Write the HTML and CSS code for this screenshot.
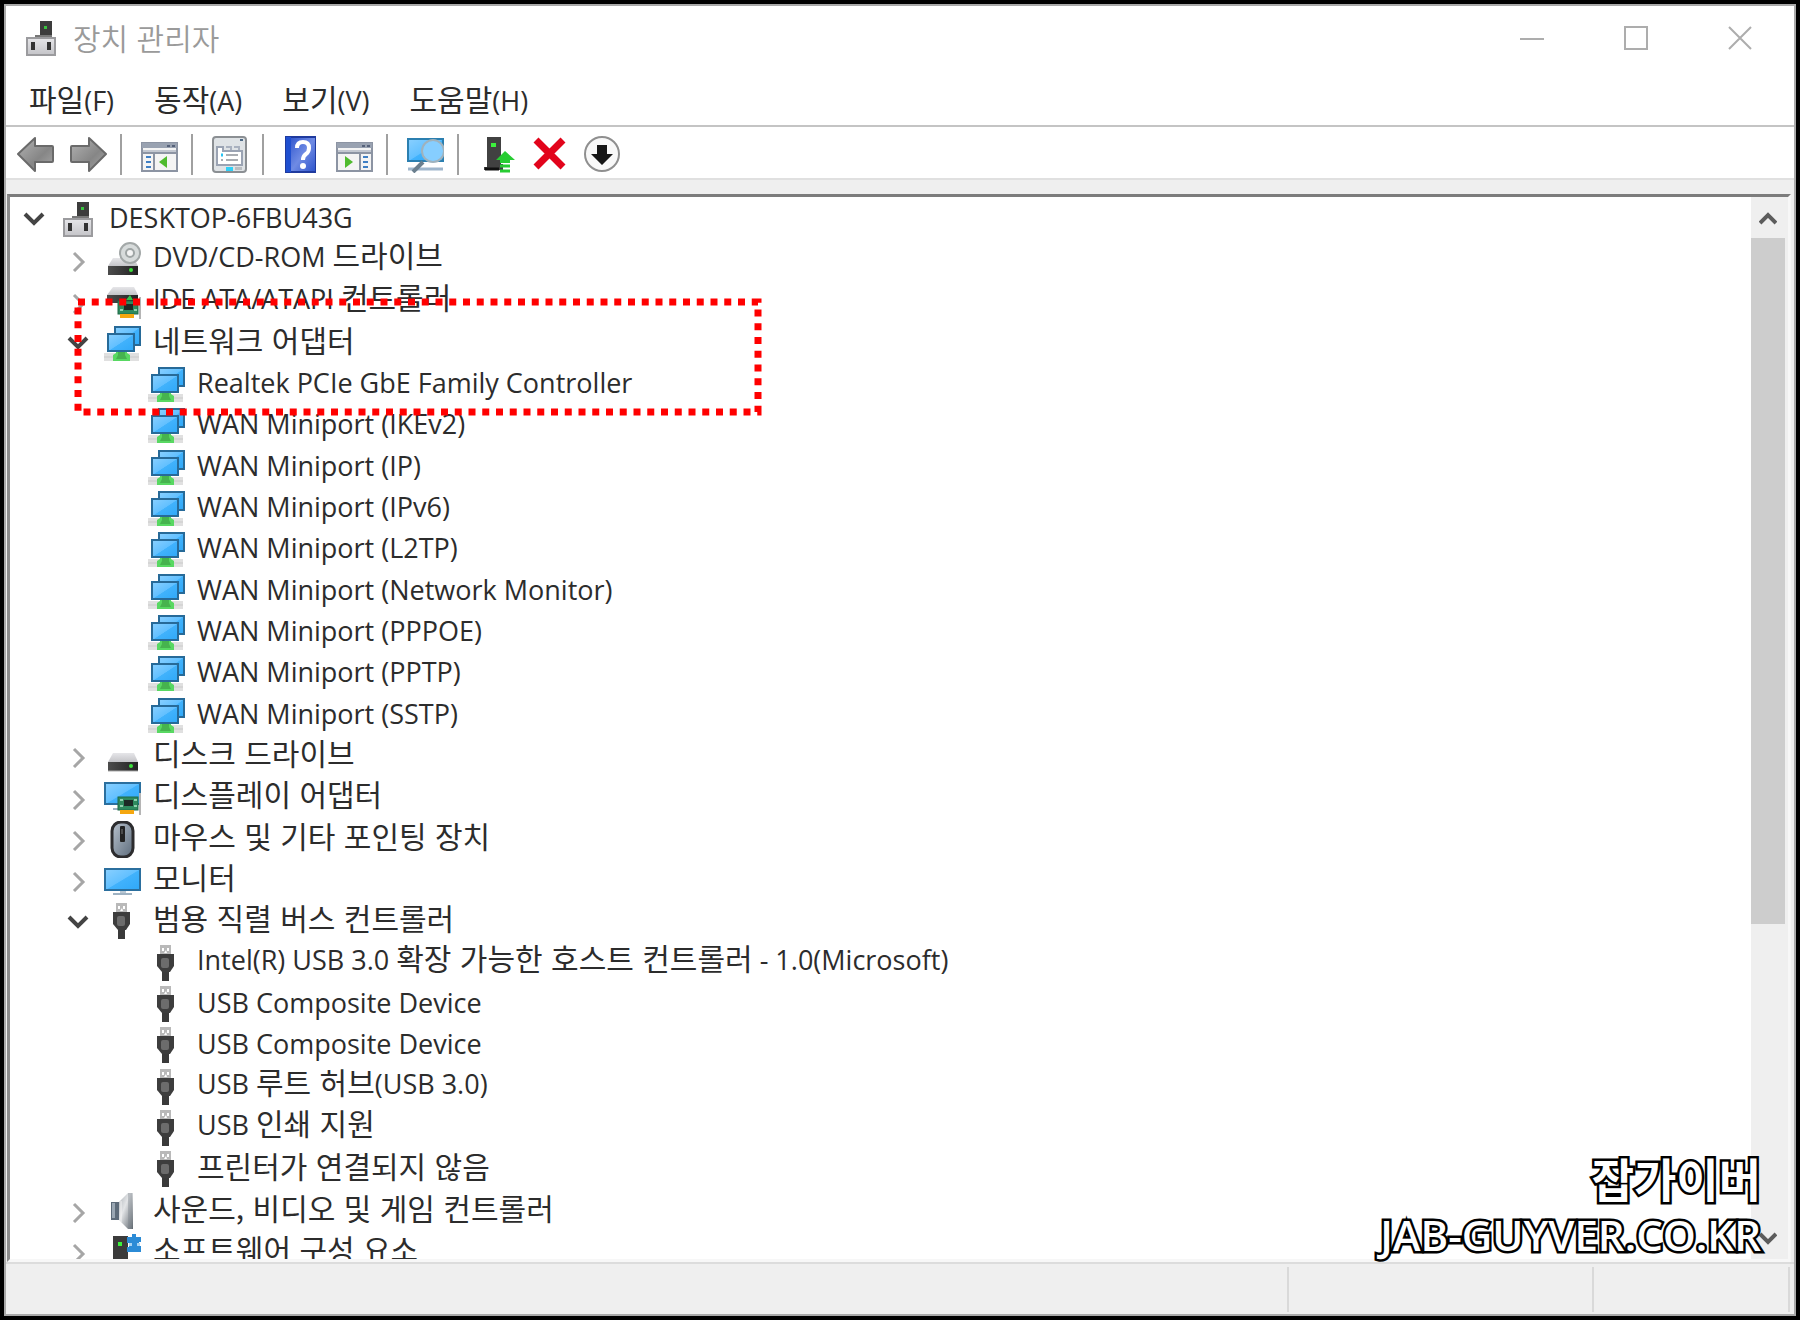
FILE: index.html
```html
<!DOCTYPE html>
<html lang="ko">
<head>
    <meta charset="UTF-8">
    <meta name="viewport" content="width=device-width, initial-scale=1.0">
    <title>장치 관리자</title>
    <link rel="stylesheet" href="styles.css">
</head>
<body>
    <!-- Iconos -->
    <svg class="sprite" aria-hidden="true">
        <defs>
            <linearGradient id="screen" x1="0" y1="0" x2="1" y2="1">
                <stop offset="0" stop-color="#8ad0ff"/>
                <stop offset="0.5" stop-color="#62c0ff"/>
                <stop offset="0.52" stop-color="#41b2fc"/>
                <stop offset="1" stop-color="#2fa8f8"/>
            </linearGradient>
            <linearGradient id="metal" x1="0" y1="0" x2="0" y2="1">
                <stop offset="0" stop-color="#e6e6e9"/>
                <stop offset="1" stop-color="#c4c4c8"/>
            </linearGradient>
            <linearGradient id="band" x1="0" y1="0" x2="1" y2="0">
                <stop offset="0" stop-color="#4c4c4c"/>
                <stop offset="1" stop-color="#222"/>
            </linearGradient>
            <linearGradient id="arrow" x1="0" y1="0" x2="1" y2="1">
                <stop offset="0" stop-color="#b4b4b4"/>
                <stop offset="0.6" stop-color="#868686"/>
                <stop offset="1" stop-color="#a8a8a8"/>
            </linearGradient>
            <linearGradient id="book" x1="0" y1="0" x2="1" y2="1">
                <stop offset="0" stop-color="#3459cf"/>
                <stop offset="0.5" stop-color="#6f8be4"/>
                <stop offset="1" stop-color="#2f55cc"/>
            </linearGradient>
            <linearGradient id="cone" x1="0" y1="0" x2="1" y2="1">
                <stop offset="0" stop-color="#aeb3b8"/>
                <stop offset="0.4" stop-color="#e3e5e7"/>
                <stop offset="1" stop-color="#5e666e"/>
            </linearGradient>
            <linearGradient id="shell" x1="0" y1="0" x2="1" y2="1">
                <stop offset="0" stop-color="#b9c3ce"/>
                <stop offset="1" stop-color="#5c6b7b"/>
            </linearGradient>
        </defs>

        <symbol id="i-computer" viewBox="0 0 37 37">
            <path d="M17 1h12v16H13v-2h4z" fill="#3c3c3c"/>
            <path d="M12 16h17" stroke="#777" stroke-width="2"/>
            <rect x="21" y="6" width="3" height="3" fill="#39c43f"/>
            <rect x="4" y="18" width="28" height="17" fill="url(#metal)" stroke="#9b9b9e" stroke-width="2"/>
            <rect x="8" y="22" width="4" height="8" fill="#333"/>
            <rect x="24" y="22" width="4" height="8" fill="#333"/>
        </symbol>
        <symbol id="i-disk" viewBox="0 0 37 37">
            <path d="M9 15h21l4 9H4z" fill="url(#metal)"/>
            <rect x="4" y="24" width="30" height="9" fill="url(#band)"/>
            <path d="M4 33h30" stroke="#aaa" stroke-width="1"/>
            <circle cx="27" cy="28" r="2" fill="#3ae03a"/>
        </symbol>
        <symbol id="i-dvd" viewBox="0 0 37 37">
            <path d="M9 16h21l4 8H4z" fill="url(#metal)"/>
            <circle cx="26" cy="11" r="10" fill="#d7dbdb" stroke="#a3a8a8" stroke-width="2"/>
            <circle cx="26" cy="11" r="4" fill="#f4f4f4" stroke="#9fa5a5" stroke-width="2"/>
            <rect x="4" y="24" width="30" height="9" fill="url(#band)"/>
            <circle cx="27" cy="28" r="2" fill="#3ae03a"/>
        </symbol>
        <symbol id="card" viewBox="0 0 37 37">
            <rect x="14" y="18" width="20" height="13" fill="#2f8a5e" stroke="#1f6b47"/>
            <path d="M16 21h3M16 27h3M30 21h3M30 27h3" stroke="#8fd0ae" stroke-width="2"/>
            <rect x="20" y="21" width="9" height="6" fill="#1d2a26"/>
            <rect x="16" y="31" width="14" height="4" fill="#f5a70f"/>
            <path d="M36 14v22" stroke="#b5b5b5" stroke-width="2"/>
        </symbol>
        <symbol id="i-ide" viewBox="0 0 37 37">
            <path d="M9 4h21l4 8H3z" fill="url(#metal)"/>
            <rect x="3" y="12" width="31" height="8" fill="url(#band)"/>
            <path d="M22 17l4-5 3 5z" fill="#35c24a"/>
            <use href="#card"/>
        </symbol>
        <symbol id="i-network" viewBox="0 0 37 37">
            <path d="M0 28h35v8H0z" fill="#e0e0e0"/>
            <path d="M0 32h35" stroke="#cacaca" stroke-width="1"/>
            <path d="M12 26h11v2l3 2v6H9v-6l3-2z" fill="#58d862"/>
            <path d="M14 27h7v3l2 4H12l2-4z" fill="#46b34e"/>
            <rect x="11" y="2" width="25" height="18" fill="url(#screen)" stroke="#276a98" stroke-width="2"/>
            <rect x="4" y="9" width="26" height="17" fill="url(#screen)" stroke="#276a98" stroke-width="2"/>
        </symbol>
        <symbol id="i-monitor" viewBox="0 0 37 37">
            <rect x="1" y="7" width="35" height="21" fill="url(#screen)" stroke="#2b6f9e" stroke-width="2"/>
            <path d="M16 29h6v2h-6z" fill="#b9c8d4"/>
            <path d="M9 32h19" stroke="#9fb2c2" stroke-width="2"/>
        </symbol>
        <symbol id="i-display" viewBox="0 0 37 37">
            <rect x="1" y="4" width="35" height="21" fill="url(#screen)" stroke="#2b6f9e" stroke-width="2"/>
            <path d="M9 30h8" stroke="#9fb2c2" stroke-width="2"/>
            <use href="#card"/>
        </symbol>
        <symbol id="i-mouse" viewBox="0 0 37 37">
            <rect x="8" y="1" width="21" height="35" rx="9" fill="url(#shell)" stroke="#2c2c2e" stroke-width="3"/>
            <rect x="16" y="5" width="5" height="16" rx="1" fill="#222"/>
            <path d="M18 8v5" stroke="#777" stroke-width="1"/>
        </symbol>
        <symbol id="i-usb" viewBox="0 0 37 37">
            <rect x="12" y="0" width="11" height="10" fill="#b9b9b9"/>
            <path d="M14 3h2v3h-2zM19 3h2v3h-2zM16 8l2-3 1 3z" fill="#fff"/>
            <path d="M9 9h17v12l-4 6h-8l-5-6z" fill="#3d3d3d"/>
            <rect x="13" y="13" width="8" height="10" rx="2" fill="#6c6c6c"/>
            <rect x="14" y="27" width="7" height="9" fill="#3a3a3a"/>
        </symbol>
        <symbol id="i-sound" viewBox="0 0 37 37">
            <path d="M15 9l9-9h5v36h-5l-9-9z" fill="url(#cone)"/>
            <path d="M24 0h4v36h-4z" fill="#7d858c" opacity="0.4"/>
            <path d="M17 8v21" stroke="#f3f3f3" stroke-width="1"/>
            <rect x="7" y="9" width="8" height="18" fill="#5d6b79"/>
            <rect x="8" y="10" width="3" height="15" fill="#9aa7b3"/>
        </symbol>
        <symbol id="i-software" viewBox="0 0 37 37">
            <path d="M9 2h15v35H9z" fill="#3b3b3b"/>
            <rect x="14" y="8" width="4" height="4" fill="#3cf03c"/>
            <path d="M23 3h5V0h4v3h5v5h-2v4h2v6H23v-5h2V9h-2z" fill="#2b8bd6"/>
            <path d="M25 9h3v3h-3zM33 9h3v3h-3z" fill="#a9d4f3"/>
        </symbol>

        <symbol id="t-back" viewBox="0 0 37 37">
            <path d="M1 18L18 2v8h17q1 0 1 1v14q0 1-1 1H18v9z" fill="url(#arrow)" stroke="#6a6a6a" stroke-width="2" stroke-linejoin="round"/>
        </symbol>
        <symbol id="t-forward" viewBox="0 0 37 37">
            <path d="M36 18L19 2v8H2q-1 0-1 1v14q0 1 1 1h17v9z" fill="url(#arrow)" stroke="#6a6a6a" stroke-width="2" stroke-linejoin="round"/>
        </symbol>
        <symbol id="t-tree" viewBox="0 0 37 37">
            <rect x="1" y="7" width="35" height="28" fill="#f4f4f4" stroke="#8c94a3" stroke-width="2"/>
            <rect x="1" y="7" width="35" height="5" fill="#99a2b1"/>
            <path d="M26 10h3M31 10h3" stroke="#56627a" stroke-width="2"/>
            <path d="M2 15h33" stroke="#c3c8d1" stroke-width="2"/>
            <path d="M1 17h35M13 17v18" stroke="#8c94a3" stroke-width="2"/>
            <path d="M5 21h5M5 26h5M5 31h5" stroke="#3f7fc4" stroke-width="2"/>
            <path d="M26 20v12l-8-6z" fill="#4fbb2e"/>
        </symbol>
        <symbol id="t-action" viewBox="0 0 37 37">
            <rect x="1" y="7" width="35" height="28" fill="#f4f4f4" stroke="#8c94a3" stroke-width="2"/>
            <rect x="1" y="7" width="35" height="5" fill="#99a2b1"/>
            <path d="M26 10h3M31 10h3" stroke="#56627a" stroke-width="2"/>
            <path d="M2 15h33" stroke="#c3c8d1" stroke-width="2"/>
            <path d="M1 17h35M24 17v18" stroke="#8c94a3" stroke-width="2"/>
            <path d="M27 21h5M27 26h5M27 31h5" stroke="#3f7fc4" stroke-width="2"/>
            <path d="M9 20v12l8-6z" fill="#4fbb2e"/>
        </symbol>
        <symbol id="t-props" viewBox="0 0 37 37">
            <rect x="1" y="1" width="33" height="35" rx="3" fill="#dfe3e6" stroke="#8b8f93" stroke-width="2"/>
            <path d="M28 3h3v2h-3z" fill="#4e6a86"/>
            <path d="M5 11h6v4h19v14H5z" fill="#fff" stroke="#9aa3b3" stroke-width="2"/>
            <path d="M14 11h5v3M22 11h5v3" fill="none" stroke="#a9b1bf" stroke-width="2"/>
            <path d="M9 19h2" stroke="#27c3f3" stroke-width="3"/>
            <path d="M14 19h12M14 24h12M9 24h2" stroke="#a9adb2" stroke-width="2"/>
            <rect x="14" y="31" width="7" height="4" fill="#2fd0f7"/>
            <rect x="23" y="31" width="7" height="3" fill="#b9bdc1"/>
        </symbol>
        <symbol id="t-help" viewBox="0 0 37 37">
            <rect x="2" y="0" width="31" height="37" fill="#1f3a9e"/>
            <rect x="3" y="1" width="5" height="35" fill="#1f4fd0"/>
            <rect x="8" y="2" width="24" height="33" fill="url(#book)"/>
            <path d="M14 12q0-6 6-6 6 0 6 6 0 4-3 6-3 2-3 6" fill="none" stroke="#fff" stroke-width="4"/>
            <circle cx="20" cy="30" r="3" fill="#fff"/>
        </symbol>
        <symbol id="t-scan" viewBox="0 0 37 37">
            <rect x="1" y="3" width="35" height="22" fill="url(#screen)" stroke="#2b7fb0" stroke-width="2"/>
            <path d="M1 33h35" stroke="#9fb6cc" stroke-width="3"/>
            <path d="M6 36l10-10" stroke="#6b7f8e" stroke-width="4"/>
            <circle cx="26" cy="15" r="11" fill="#86ceff" stroke="#9fb2bd" stroke-width="2"/>
        </symbol>
        <symbol id="t-update" viewBox="0 0 37 37">
            <path d="M9 1h14v27h2v6H6v-3h3z" fill="#414141"/>
            <path d="M7 33h14" stroke="#111" stroke-width="3"/>
            <rect x="13" y="7" width="5" height="4" fill="#3cf03c"/>
            <path d="M27 15l10 9h-5v3H22v-3h-4z" fill="#27cc32"/>
            <path d="M22 30h10M22 35h10" stroke="#27cc32" stroke-width="3"/>
        </symbol>
        <symbol id="t-remove" viewBox="0 0 37 37">
            <path d="M5 4l27 27M32 4L5 31" stroke="#e2041b" stroke-width="7"/>
        </symbol>
        <symbol id="t-disable" viewBox="0 0 37 37">
            <circle cx="18" cy="18" r="17" fill="#f8f8f8" stroke="#8f8f8f" stroke-width="2"/>
            <path d="M13 9h10v9h6L18 29 7 18h6z" fill="#161616"/>
        </symbol>

        <symbol id="c-down" viewBox="0 0 24 24">
            <path d="M3 7l9 9 9-9" fill="none" stroke="#444" stroke-width="4"/>
        </symbol>
        <symbol id="c-right" viewBox="0 0 24 24">
            <path d="M8 5l9 9-9 9" fill="none" stroke="#a6a6a6" stroke-width="3"/>
        </symbol>
    </svg>

    <div class="window">
        <header class="titlebar">
            <svg class="icon"><use href="#i-computer"/></svg>
            <h1>장치 관리자</h1>
            <div class="window-buttons">
                <button type="button" aria-label="최소화"><svg viewBox="0 0 24 24"><path d="M0 13h24"/></svg></button>
                <button type="button" aria-label="최대화"><svg viewBox="0 0 24 24"><path d="M1 1h22v22H1z"/></svg></button>
                <button type="button" aria-label="닫기"><svg viewBox="0 0 24 24"><path d="M1 1l22 22M23 1L1 23"/></svg></button>
            </div>
        </header>

        <nav class="menubar">
            <button type="button">파일<span class="en">(F)</span></button>
            <button type="button">동작<span class="en">(A)</span></button>
            <button type="button">보기<span class="en">(V)</span></button>
            <button type="button">도움말<span class="en">(H)</span></button>
        </nav>

        <div class="toolbar">
            <button type="button" aria-label="뒤로"><svg class="icon"><use href="#t-back"/></svg></button>
            <button type="button" aria-label="앞으로"><svg class="icon"><use href="#t-forward"/></svg></button>
            <span class="separator"></span>
            <button type="button" aria-label="콘솔 트리 표시"><svg class="icon"><use href="#t-tree"/></svg></button>
            <span class="separator"></span>
            <button type="button" aria-label="속성"><svg class="icon"><use href="#t-props"/></svg></button>
            <span class="separator"></span>
            <button type="button" aria-label="도움말"><svg class="icon"><use href="#t-help"/></svg></button>
            <button type="button" aria-label="작업 창 표시"><svg class="icon"><use href="#t-action"/></svg></button>
            <span class="separator"></span>
            <button type="button" aria-label="하드웨어 변경 사항 검색"><svg class="icon"><use href="#t-scan"/></svg></button>
            <span class="separator"></span>
            <button type="button" aria-label="드라이버 업데이트"><svg class="icon"><use href="#t-update"/></svg></button>
            <button type="button" aria-label="디바이스 제거"><svg class="icon"><use href="#t-remove"/></svg></button>
            <button type="button" aria-label="디바이스 사용 안 함"><svg class="icon"><use href="#t-disable"/></svg></button>
        </div>

        <main class="content">
            <ul class="tree">
                <li class="node level-0"><button type="button" class="toggle" aria-label="축소"><svg><use href="#c-down"/></svg></button><svg class="icon"><use href="#i-computer"/></svg><span class="name en">DESKTOP-6FBU43G</span></li>
                <li class="node level-1"><button type="button" class="toggle" aria-label="확장"><svg><use href="#c-right"/></svg></button><svg class="icon"><use href="#i-dvd"/></svg><span class="name"><span class="en">DVD/CD-ROM </span>드라이브</span></li>
                <li class="node level-1"><button type="button" class="toggle" aria-label="확장"><svg><use href="#c-right"/></svg></button><svg class="icon"><use href="#i-ide"/></svg><span class="name"><span class="en">IDE ATA/ATAPI </span>컨트롤러</span></li>
                <li class="node level-1"><button type="button" class="toggle" aria-label="축소"><svg><use href="#c-down"/></svg></button><svg class="icon"><use href="#i-network"/></svg><span class="name">네트워크 어댑터</span></li>
                <li class="node level-2"><svg class="icon"><use href="#i-network"/></svg><span class="name en">Realtek PCIe GbE Family Controller</span></li>
                <li class="node level-2"><svg class="icon"><use href="#i-network"/></svg><span class="name en">WAN Miniport (IKEv2)</span></li>
                <li class="node level-2"><svg class="icon"><use href="#i-network"/></svg><span class="name en">WAN Miniport (IP)</span></li>
                <li class="node level-2"><svg class="icon"><use href="#i-network"/></svg><span class="name en">WAN Miniport (IPv6)</span></li>
                <li class="node level-2"><svg class="icon"><use href="#i-network"/></svg><span class="name en">WAN Miniport (L2TP)</span></li>
                <li class="node level-2"><svg class="icon"><use href="#i-network"/></svg><span class="name en">WAN Miniport (Network Monitor)</span></li>
                <li class="node level-2"><svg class="icon"><use href="#i-network"/></svg><span class="name en">WAN Miniport (PPPOE)</span></li>
                <li class="node level-2"><svg class="icon"><use href="#i-network"/></svg><span class="name en">WAN Miniport (PPTP)</span></li>
                <li class="node level-2"><svg class="icon"><use href="#i-network"/></svg><span class="name en">WAN Miniport (SSTP)</span></li>
                <li class="node level-1"><button type="button" class="toggle" aria-label="확장"><svg><use href="#c-right"/></svg></button><svg class="icon"><use href="#i-disk"/></svg><span class="name">디스크 드라이브</span></li>
                <li class="node level-1"><button type="button" class="toggle" aria-label="확장"><svg><use href="#c-right"/></svg></button><svg class="icon"><use href="#i-display"/></svg><span class="name">디스플레이 어댑터</span></li>
                <li class="node level-1"><button type="button" class="toggle" aria-label="확장"><svg><use href="#c-right"/></svg></button><svg class="icon"><use href="#i-mouse"/></svg><span class="name">마우스 및 기타 포인팅 장치</span></li>
                <li class="node level-1"><button type="button" class="toggle" aria-label="확장"><svg><use href="#c-right"/></svg></button><svg class="icon"><use href="#i-monitor"/></svg><span class="name">모니터</span></li>
                <li class="node level-1"><button type="button" class="toggle" aria-label="축소"><svg><use href="#c-down"/></svg></button><svg class="icon"><use href="#i-usb"/></svg><span class="name">범용 직렬 버스 컨트롤러</span></li>
                <li class="node level-2"><svg class="icon"><use href="#i-usb"/></svg><span class="name"><span class="en">Intel(R) USB 3.0 </span>확장 가능한 호스트 컨트롤러<span class="en"> - 1.0(Microsoft)</span></span></li>
                <li class="node level-2"><svg class="icon"><use href="#i-usb"/></svg><span class="name en">USB Composite Device</span></li>
                <li class="node level-2"><svg class="icon"><use href="#i-usb"/></svg><span class="name en">USB Composite Device</span></li>
                <li class="node level-2"><svg class="icon"><use href="#i-usb"/></svg><span class="name"><span class="en">USB </span>루트 허브<span class="en">(USB 3.0)</span></span></li>
                <li class="node level-2"><svg class="icon"><use href="#i-usb"/></svg><span class="name"><span class="en">USB </span>인쇄 지원</span></li>
                <li class="node level-2"><svg class="icon"><use href="#i-usb"/></svg><span class="name">프린터가 연결되지 않음</span></li>
                <li class="node level-1"><button type="button" class="toggle" aria-label="확장"><svg><use href="#c-right"/></svg></button><svg class="icon"><use href="#i-sound"/></svg><span class="name">사운드, 비디오 및 게임 컨트롤러</span></li>
                <li class="node level-1"><button type="button" class="toggle" aria-label="확장"><svg><use href="#c-right"/></svg></button><svg class="icon"><use href="#i-software"/></svg><span class="name">소프트웨어 구성 요소</span></li>
            </ul>

            <div class="scrollbar">
                <button type="button" aria-label="위로"><svg viewBox="0 0 18 16"><path d="M1 13l8-8 8 8"/></svg></button>
                <div class="track"><div class="thumb"></div></div>
                <button type="button" aria-label="아래로"><svg viewBox="0 0 18 16"><path d="M1 3l8 8 8-8"/></svg></button>
            </div>

            <!-- Recuadro rojo -->
            <svg class="highlight" viewBox="0 0 688 118"><path d="M4 4h680v110H4z"/></svg>
        </main>

        <footer class="statusbar">
            <span></span>
            <span></span>
            <span></span>
        </footer>
    </div>

    <div class="watermark">
        <p class="brand">잡가이버</p>
        <p class="site">JAB-GUYVER.CO.KR</p>
    </div>
</body>
</html>
```

FILE: styles.css
```css
* {
    box-sizing: border-box;
}
body {
    margin: 0;
    height: 100vh;
    padding: 4px;
    background: #000;
    color: #2c2c2c;
    font-family: "Noto Sans CJK KR", "Noto Sans", sans-serif;
    font-size: 30px;
    line-height: 40px;
    position: relative;
}
h1, p, ul {
    margin: 0;
    padding: 0;
}
button {
    border: none;
    background: none;
    padding: 0;
    font: inherit;
    color: inherit;
}
.en {
    font-family: "Open Sans", "Noto Sans", sans-serif;
    font-size: 27px;
    white-space: pre;
}
.sprite {
    position: absolute;
    width: 0;
    height: 0;
}
.icon {
    width: 37px;
    height: 37px;
    flex: none;
    display: block;
}

.window {
    height: 100%;
    display: flex;
    flex-direction: column;
    background: #efefef;
    border: 2px solid #a9a9a9;
}

.titlebar {
    display: flex;
    align-items: center;
    height: 64px;
    padding: 0 2px 0 17px;
    background: #fff;
}
.titlebar h1 {
    flex: 1;
    margin-left: 13px;
    padding-bottom: 3px;
    font-size: 30px;
    font-weight: 350;
    color: #9a9a9a;
}
.window-buttons {
    display: flex;
}
.window-buttons button {
    width: 104px;
    height: 64px;
    display: flex;
    align-items: center;
    justify-content: center;
}
.window-buttons svg {
    width: 24px;
    height: 24px;
    fill: none;
    stroke: #adadad;
    stroke-width: 2;
}

.menubar {
    display: flex;
    gap: 40px;
    height: 57px;
    padding: 4px 23px 0;
    background: #fff;
    border-bottom: 2px solid #c4c4c4;
}

.toolbar {
    display: flex;
    align-items: center;
    height: 53px;
    padding: 4px 0 0 3px;
    background: #fff;
    border-bottom: 2px solid #e0e0e0;
}
.toolbar button {
    width: 53px;
    height: 45px;
    display: flex;
    align-items: center;
    justify-content: center;
}
.separator {
    width: 2px;
    height: 41px;
    margin: 0 11px 0 5px;
    background: #a0a0a0;
}

.content {
    position: relative;
    flex: 1;
    min-height: 0;
    display: flex;
    margin: 14px 3px 0 1px;
    background: #fff;
    border: 3px solid;
    border-color: #7c7c7c #f7f7f7 #f7f7f7 #8c8c8c;
    overflow: hidden;
}
.tree {
    flex: 1;
    list-style: none;
    overflow: hidden;
}
.node {
    display: flex;
    align-items: center;
    height: 41px;
    white-space: nowrap;
}
.node:nth-child(3n) {
    height: 42px;
}
.node .icon, .toggle {
    margin-top: 3px;
}
.level-0 {
    padding-left: 0;
}
.level-1 {
    padding-left: 44px;
}
.level-2 {
    padding-left: 138px;
}
.toggle {
    width: 48px;
    height: 37px;
    margin-right: 2px;
    display: flex;
    align-items: center;
    justify-content: center;
}
.toggle svg {
    width: 24px;
    height: 24px;
}
.name {
    margin-left: 12px;
    padding-bottom: 6px;
}
.name.en {
    padding-bottom: 0;
}

.scrollbar {
    width: 37px;
    display: flex;
    flex-direction: column;
    background: #efefef;
    padding-right: 3px;
}
.scrollbar button {
    height: 41px;
    display: flex;
    align-items: center;
    justify-content: center;
}
.scrollbar svg {
    width: 18px;
    height: 16px;
    fill: none;
    stroke: #5c5c5c;
    stroke-width: 4;
}
.track {
    flex: 1;
}
.thumb {
    height: 70%;
    background: #cdcdcd;
}

.highlight {
    position: absolute;
    left: 64px;
    top: 101px;
    width: 688px;
    height: 118px;
    fill: none;
    stroke: #f00;
    stroke-width: 7;
    stroke-dasharray: 7 6.75;
}

.statusbar {
    display: flex;
    height: 52px;
    padding: 3px 4px 2px 0;
    border-top: 2px solid #dcdcdc;
}
.statusbar span {
    border-right: 2px solid #d9d9d9;
}
.statusbar span:nth-child(1) {
    flex: 1;
}
.statusbar span:nth-child(2) {
    width: 305px;
}
.statusbar span:nth-child(3) {
    width: 196px;
}

.watermark {
    position: absolute;
    right: 39px;
    bottom: 56px;
    text-align: right;
    color: #fff;
    font-weight: 700;
    -webkit-text-stroke: 5px #000;
    paint-order: stroke fill;
}
.brand {
    font-size: 46px;
    line-height: 58px;
}
.site {
    font-family: "Open Sans", "Noto Sans", sans-serif;
    font-size: 42px;
    font-weight: 600;
    line-height: 58px;
}
```
